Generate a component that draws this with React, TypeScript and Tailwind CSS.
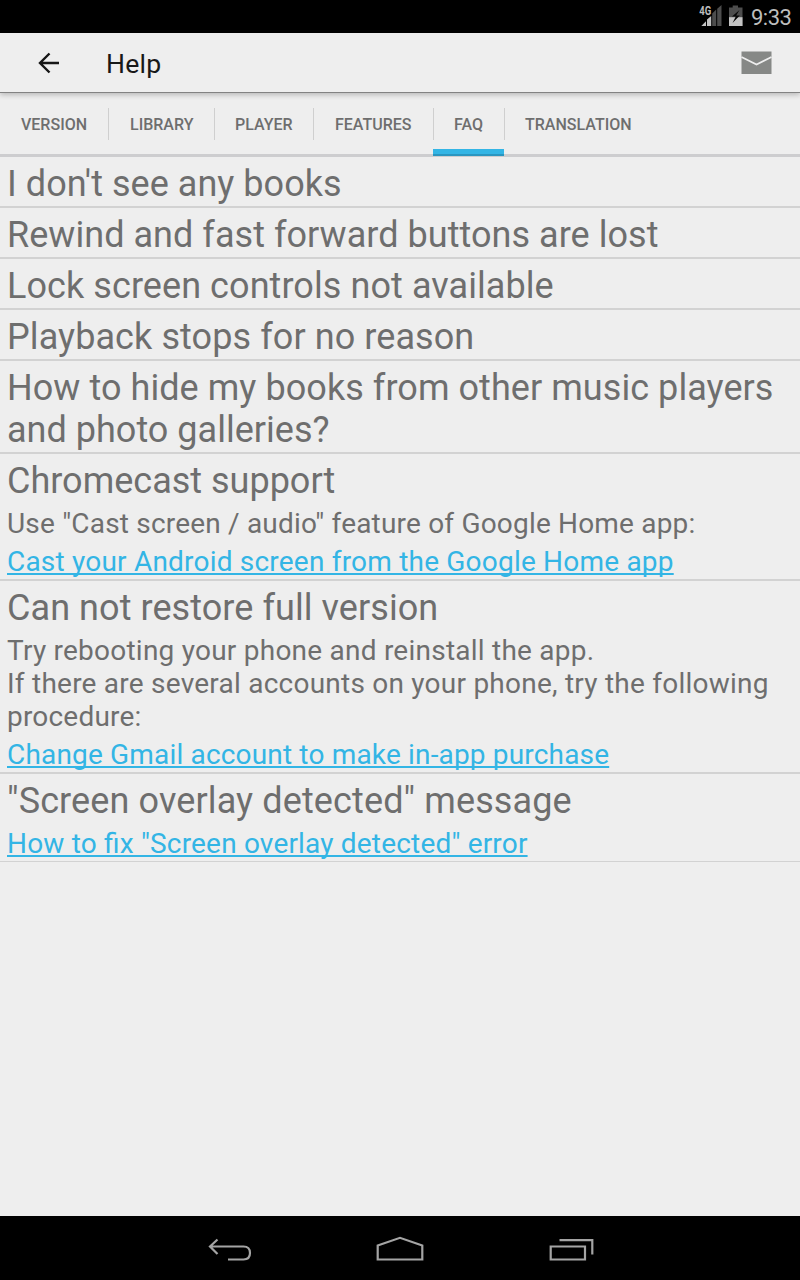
import React from "react";

type Line = { text: string; spacing: string };
type Item = { title: Line[]; body?: Line[]; link?: Line };

const items: Item[] = [
  { title: [{ text: "I don't see any books", spacing: "0.04px" }] },
  { title: [{ text: "Rewind and fast forward buttons are lost", spacing: "0.04px" }] },
  { title: [{ text: "Lock screen controls not available", spacing: "0.075px" }] },
  { title: [{ text: "Playback stops for no reason", spacing: "0.085px" }] },
  {
    title: [
      { text: "How to hide my books from other music players", spacing: "0.06px" },
      { text: "and photo galleries?", spacing: "0.02px" },
    ],
  },
  {
    title: [{ text: "Chromecast support", spacing: "0px" }],
    body: [{ text: 'Use "Cast screen / audio" feature of Google Home app:', spacing: "0.19px" }],
    link: { text: "Cast your Android screen from the Google Home app", spacing: "0.205px" },
  },
  {
    title: [{ text: "Can not restore full version", spacing: "0.07px" }],
    body: [
      { text: "Try rebooting your phone and reinstall the app.", spacing: "0.234px" },
      { text: "If there are several accounts on your phone, try the following", spacing: "0.234px" },
      { text: "procedure:", spacing: "0.2px" },
    ],
    link: { text: "Change Gmail account to make in-app purchase", spacing: "0.17px" },
  },
  {
    title: [{ text: '"Screen overlay detected" message', spacing: "0.12px" }],
    link: { text: 'How to fix "Screen overlay detected" error', spacing: "0.18px" },
  },
];

const tabs = [
  { label: "VERSION", width: "w-[108px]", pad: "ml-[21px]" },
  { label: "LIBRARY", width: "w-[106px]", pad: "ml-[21px]" },
  { label: "PLAYER", width: "w-[99px]", pad: "ml-[20px]" },
  { label: "FEATURES", width: "w-[120px]", pad: "ml-[21px]" },
  { label: "FAQ", width: "w-[71px]", pad: "ml-[20px]" },
  { label: "TRANSLATION", width: "w-[148px]", pad: "ml-[20px]" },
];

function StatusBar() {
  return (
    <div className="flex h-[33px] shrink-0 items-start justify-end bg-black pr-[8px] text-[#bdbdbd]">
      <svg className="h-[33px] w-[50px]" viewBox="0 0 50 33">
        <path d="M7 21.200V26H2.300Z" fill="#c4c4c4" />
        <path d="M8 19.500L12.200 16V26H8Z" fill="#c4c4c4" />
        <path d="M13.200 13.500L17.200 9.500V26H13.200Z" fill="#4d4d4d" />
        <path d="M18.200 8.800L22.500 5V26H18.200Z" fill="#4d4d4d" />
        <text x="0.300" y="14.800" fontSize="12" fontWeight="700" textLength="12" lengthAdjust="spacingAndGlyphs" fill="#bdbdbd" fontFamily="Roboto, sans-serif">4G</text>
        <path d="M33.700 5.500H39V7.500H43.500V26H30V7.500H33.700Z" fill="#4d4d4d" />
        <path d="M30 17.200H43.500V26H30Z" fill="#c4c4c4" />
        <path d="M40.500 10L33 16.500H36.800L33.500 23L40.800 15.500H37.200Z" fill="#080808" />
      </svg>
      <span className="ml-[2px] mt-[5px] w-[41px] whitespace-nowrap text-[22px] leading-[26px] tracking-[-0.500px]">9:33</span>
    </div>
  );
}

function AppBar() {
  return (
    <div className="z-10 flex h-[60px] shrink-0 items-center border-b border-[#828282] bg-[#eeeeee] pl-[36px] pr-[28px] shadow-[0_2px_5px_rgba(0,0,0,0.22)]">
      <svg className="h-[24px] w-[24px]" viewBox="0 0 24 24" fill="none" stroke="#161616" strokeWidth="2.400">
        <path d="M23 12H4M13.500 2.500L4 12L13.500 21.500" />
      </svg>
      <span className="ml-[46px] mt-[2px] text-[26.600px] leading-[32px] tracking-[0.200px] text-[#181818]">Help</span>
      <svg className="ml-auto h-[23px] w-[31px]" viewBox="0 0 31 23">
        <path d="M0.500 0.500H30.500V23H0.500Z" fill="#868886" />
        <path d="M0.500 6L15.500 13.500L30.500 6" fill="none" stroke="#eeeeee" strokeWidth="1.800" />
      </svg>
    </div>
  );
}

function TabBar() {
  return (
    <div className="relative flex h-[64px] shrink-0 border-b-[3px] border-[#cdcdcf]">
      {tabs.map((tab, i) => (
        <div key={tab.label} className={`${tab.width} relative flex h-[61px] flex-col`}>
          <div className="mt-[15px] flex h-[32px] items-center">
            {i > 0 && <span className="h-[32px] w-px shrink-0 bg-[#cfcfcf]" />}
            <span className={`${tab.pad} mt-[2px] text-[16px] font-medium`}>{tab.label}</span>
          </div>
          {tab.label === "FAQ" && (
            <span className="absolute left-0 top-[56px] h-[7px] w-[71px] border-b-2 border-[#2a96c0] bg-[#33b5e5]" />
          )}
        </div>
      ))}
    </div>
  );
}

function TextLine({ line }: { line: Line }) {
  return (
    <div className="whitespace-nowrap">
      <span style={{ letterSpacing: line.spacing }}>{line.text}</span>
    </div>
  );
}

function FaqItem({ item }: { item: Item }) {
  return (
    <section className="border-b-2 border-[#d2d2d2] pl-[7px] last:border-b">
      <h2 className="pb-[1px] pt-[6px] text-[36px] leading-[42px]">
        {item.title.map((line) => <TextLine key={line.text} line={line} />)}
      </h2>
      {item.body && (
        <div className="pb-[1px] pt-[4px] text-[28px] leading-[33px]">
          {item.body.map((line) => <TextLine key={line.text} line={line} />)}
        </div>
      )}
      {item.link && (
        <a className="block pb-[1px] pt-[4px] text-[28px] leading-[33px] text-[#33b5e5] underline decoration-2 underline-offset-[2px] [text-decoration-skip-ink:none]">
          <TextLine line={item.link} />
        </a>
      )}
    </section>
  );
}

function NavBar() {
  return (
    <div className="flex h-[64px] shrink-0 items-center justify-center bg-black">
      <svg className="h-[64px] w-[400px]" viewBox="200 1216 400 64" fill="none" stroke="#a4a4a4" strokeWidth="2.200">
        <path d="M210 1246.500H243.500C248 1246.500 250 1249 250 1253C250 1257 248 1259.500 243.500 1259.500H228M217.500 1239.500L210 1246.500L217.500 1254" />
        <path d="M377.700 1259.500V1245.500L400 1237.800L422.300 1245.500V1259.500Z" />
        <path d="M550.700 1246.500H585V1259.500H550.700ZM559.500 1240.200H592.300V1254.500" />
      </svg>
    </div>
  );
}

export default function App() {
  return (
    <div
      className="flex h-[1280px] w-[800px] flex-col overflow-hidden bg-[#eeeeee] text-[#6e6e6e] [font-feature-settings:'liga']"
      style={{ fontFamily: "Roboto, sans-serif" }}
    >
      <StatusBar />
      <AppBar />
      <TabBar />
      <main className="flex-1">
        {items.map((item) => <FaqItem key={item.title[0].text} item={item} />)}
      </main>
      <NavBar />
    </div>
  );
}
